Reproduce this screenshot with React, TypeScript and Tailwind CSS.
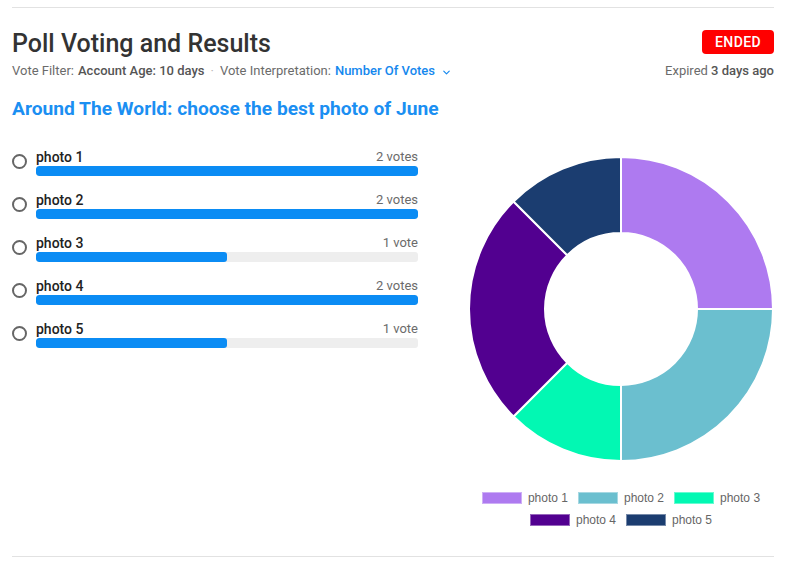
import { ChevronDown } from 'lucide-react'

const options = [
  { name: 'photo 1', votes: 2, color: '#ae7af0' },
  { name: 'photo 2', votes: 2, color: '#6bbfcf' },
  { name: 'photo 3', votes: 1, color: '#02f8b3' },
  { name: 'photo 4', votes: 2, color: '#520090' },
  { name: 'photo 5', votes: 1, color: '#1b3d70' },
]

const total = options.reduce((s, o) => s + o.votes, 0)
const maxVotes = Math.max(...options.map((o) => o.votes))

function arc(cx: number, cy: number, R: number, r: number, a0: number, a1: number) {
  const p = (rad: number, a: number) => {
    const t = ((a - 90) * Math.PI) / 180
    return `${(cx + rad * Math.cos(t)).toFixed(2)} ${(cy + rad * Math.sin(t)).toFixed(2)}`
  }
  const large = a1 - a0 > 180 ? 1 : 0
  return `M ${p(R, a0)} A ${R} ${R} 0 ${large} 1 ${p(R, a1)} L ${p(r, a1)} A ${r} ${r} 0 ${large} 0 ${p(r, a0)} Z`
}

function Donut() {
  let start = 0
  return (
    <svg width="306" height="306" viewBox="0 0 306 306">
      {options.map((o) => {
        const sweep = (o.votes / total) * 360
        const d = arc(153, 153, 152, 76, start, start + sweep)
        start += sweep
        return <path key={o.name} d={d} fill={o.color} stroke="#fff" strokeWidth={2} />
      })}
    </svg>
  )
}

export default function App() {
  return (
    <div className="bg-white min-h-screen pt-[7px]" style={{ fontFamily: 'Roboto, sans-serif' }}>
      <div className="ml-3 w-[762px] border-t border-[#e2e2e2]">
        <div className="flex justify-between pt-[21px]">
          <div>
            <h1 className="text-[25px] font-medium leading-[30px] text-[#333]">Poll Voting and Results</h1>
            <div className="mt-[4px] flex items-center text-[13px] leading-4 text-[#6b6b6b]">
              <span>Vote Filter:</span>
              <span className="ml-1 font-medium text-[#555]">Account Age: 10 days</span>
              <span className="mx-[6px] text-[#bbb]">·</span>
              <span>Vote Interpretation:</span>
              <span className="ml-1 font-medium text-[#1588ee]">Number Of Votes</span>
              <ChevronDown className="ml-[6px] mt-[2px] text-[#1588ee]" size={11} strokeWidth={2.5} />
            </div>
          </div>
          <div className="flex flex-col items-end">
            <div className="mt-[1px] flex h-6 w-[72px] items-center justify-center rounded-sm bg-[#ff0000] text-sm font-medium tracking-wide text-white">
              ENDED
            </div>
            <div className="mt-[9px] text-[13px] leading-4 text-[#6b6b6b]">
              Expired <span className="font-medium text-[#555]">3 days ago</span>
            </div>
          </div>
        </div>

        <h2 className="mt-[18px] text-[19.2px] font-bold leading-6 text-[#1b8ff2]">
          Around The World: choose the best photo of June
        </h2>

        <div className="mt-[28px] flex items-start justify-between">
          <div className="flex w-[406px] flex-col gap-4">
            {options.map((o) => (
              <div key={o.name} className="flex items-start gap-[9px]">
                <div className="mt-[5px] h-[15px] w-[15px] shrink-0 rounded-full border-2 border-[#666]" />
                <div className="flex-1">
                  <div className="flex h-4 items-end justify-between">
                    <span className="text-sm leading-4 font-medium text-[#222]">{o.name}</span>
                    <span className="text-[13px] leading-4 text-[#6b6b6b]">
                      {o.votes} {o.votes === 1 ? 'vote' : 'votes'}
                    </span>
                  </div>
                  <div className="mt-[1px] h-[10px] overflow-hidden rounded-[3px] bg-[#eeeeee]">
                    <div
                      className="h-full rounded-[3px] bg-[#0b8cf4]"
                      style={{ width: `${(o.votes / maxVotes) * 100}%` }}
                    />
                  </div>
                </div>
              </div>
            ))}
          </div>

          <div className="mt-[7px] flex w-[306px] flex-col items-center">
            <Donut />
            <div
              className="mt-[30px] flex w-[306px] flex-wrap justify-center gap-x-[10px] gap-y-[10px] text-xs leading-3 text-[#666]"
              style={{ fontFamily: '"Liberation Sans", Arial, sans-serif' }}
            >
              {options.map((o) => (
                <div key={o.name} className="flex items-center gap-[6px]">
                  <span className="h-3 w-10 border border-white/40" style={{ backgroundColor: o.color }} />
                  <span>{o.name}</span>
                </div>
              ))}
            </div>
          </div>
        </div>
      </div>
      <div className="ml-3 mt-[30px] w-[762px] border-t border-[#e2e2e2]" />
    </div>
  )
}
